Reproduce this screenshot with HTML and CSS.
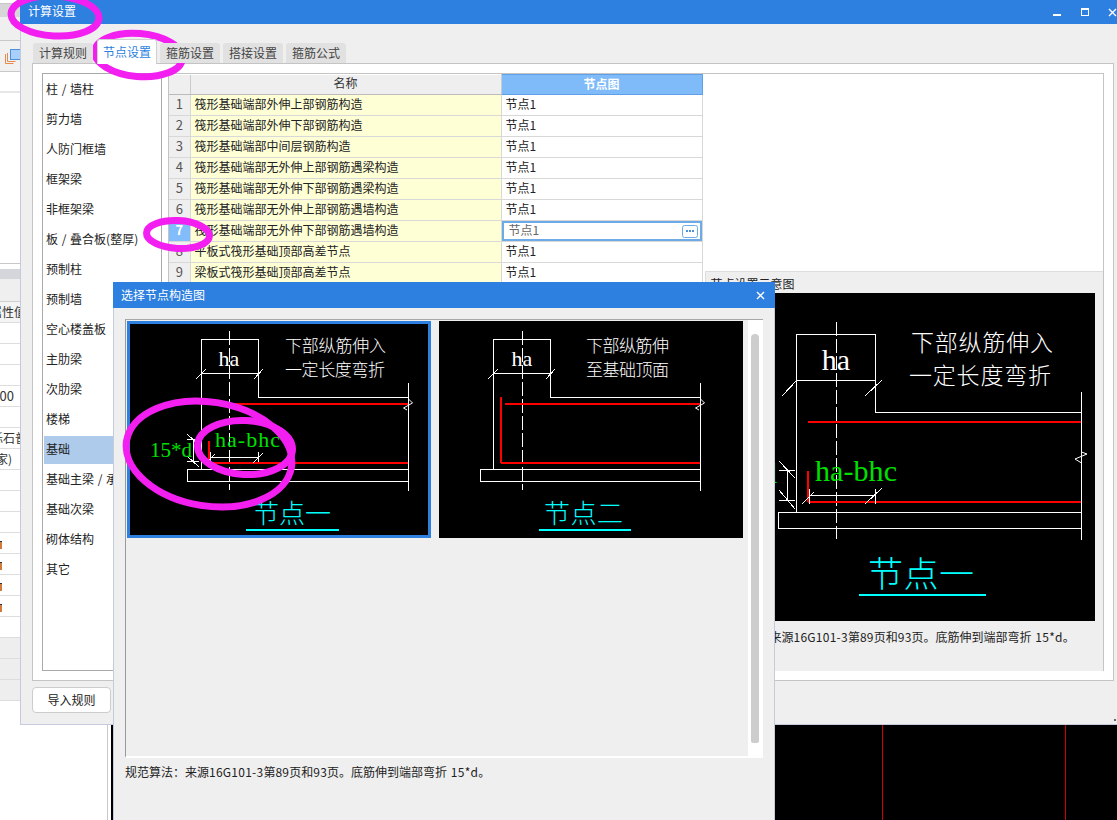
FILE: index.html
```html
<!DOCTYPE html>
<html lang="zh-CN">
<head>
<meta charset="utf-8">
<title>计算设置</title>
<link rel="stylesheet" href="styles.css">
</head>
<body>
<div class="desktop">

  <aside class="props">
    <div class="props-top"></div>
    <div class="props-gray"></div>
    <div class="props-band"></div>
    <div class="props-tools">
      <svg class="tool-icon" width="18" height="16" viewBox="0 0 18 16"><path class="tool-orange" d="M1.500 6v9.500h8M3.500 5v8.500h8"/><rect class="tool-blue" x="6.500" y="1.500" width="10" height="10"/></svg>
    </div>
    <div class="props-white"></div>
    <div class="props-rule"></div>
    <div class="props-empty"></div>
    <div class="props-section"></div>
    <div class="props-band props-band--low"></div>
    <div class="prow prow--head"><span class="ptext ptext--head">属性值</span></div>
    <div class="prow"></div>
    <div class="prow"></div>
    <div class="prow"></div>
    <div class="prow"><span class="ptext ptext--num">3000</span></div>
    <div class="prow"></div>
    <div class="prow"><span class="ptext ptext--mat">砾石普通</span></div>
    <div class="prow"><span class="ptext ptext--close">家)</span></div>
    <div class="prow"></div>
    <div class="prow"></div>
    <div class="prow"></div>
    <div class="prow"><i class="pmark"></i></div>
    <div class="prow"><i class="pmark"></i></div>
    <div class="prow"><i class="pmark"></i></div>
    <div class="prow"><i class="pmark"></i></div>
    <div class="prow"></div>
    <div class="prow prow--gray"></div>
    <div class="prow prow--gray"></div>
    <div class="prow prow--gray"></div>
  </aside>

  <div class="cad">
    <i class="cad-line cad-line--a"></i>
    <i class="cad-line cad-line--b"></i>
  </div>

  <section class="win">
    <header class="titlebar">
      <span class="title-text">计算设置</span>
      <div class="win-ctrls">
        <i class="ctrl-min"></i>
        <i class="ctrl-max"></i>
        <svg class="ctrl-close" width="9" height="9" viewBox="0 0 9 9"><path d="M1 1l7 7M8 1l-7 7"/></svg>
      </div>
    </header>
    <nav class="tabs">
      <span class="tab">计算规则</span>
      <span class="tab tab--active">节点设置</span>
      <span class="tab">箍筋设置</span>
      <span class="tab">搭接设置</span>
      <span class="tab">箍筋公式</span>
    </nav>
    <div class="panel">
      <ul class="cats">
        <li>柱 / 墙柱</li>
        <li>剪力墙</li>
        <li>人防门框墙</li>
        <li>框架梁</li>
        <li>非框架梁</li>
        <li>板 / 叠合板(整厚)</li>
        <li>预制柱</li>
        <li>预制墙</li>
        <li>空心楼盖板</li>
        <li>主肋梁</li>
        <li>次肋梁</li>
        <li>楼梯</li>
        <li class="cat--on">基础</li>
        <li>基础主梁 / 承台梁</li>
        <li>基础次梁</li>
        <li>砌体结构</li>
        <li>其它</li>
      </ul>
      <div class="sheet">
        <table class="grid">
          <colgroup><col class="col-n"><col class="col-name"><col class="col-node"></colgroup>
          <thead>
            <tr><th></th><th>名称</th><th class="th-on">节点图</th></tr>
          </thead>
          <tbody>
            <tr><td class="num">1</td><td class="name">筏形基础端部外伸上部钢筋构造</td><td class="node">节点1</td></tr>
            <tr><td class="num">2</td><td class="name">筏形基础端部外伸下部钢筋构造</td><td class="node">节点1</td></tr>
            <tr><td class="num">3</td><td class="name">筏形基础端部中间层钢筋构造</td><td class="node">节点1</td></tr>
            <tr><td class="num">4</td><td class="name">筏形基础端部无外伸上部钢筋遇梁构造</td><td class="node">节点1</td></tr>
            <tr><td class="num">5</td><td class="name">筏形基础端部无外伸下部钢筋遇梁构造</td><td class="node">节点1</td></tr>
            <tr><td class="num">6</td><td class="name">筏形基础端部无外伸上部钢筋遇墙构造</td><td class="node">节点1</td></tr>
            <tr><td class="num num--on">7</td><td class="name">筏形基础端部无外伸下部钢筋遇墙构造</td><td class="node node--edit"><div class="edit"><span>节点1</span><svg class="dots" width="16" height="13" viewBox="0 0 16 13"><rect class="dots-box" x="0.500" y="0.500" width="15" height="12" rx="2"/><path class="dots-pts" d="M4 5h2v2H4zM7 5h2v2H7zM10 5h2v2h-2z"/></svg></div></td></tr>
            <tr><td class="num">8</td><td class="name">平板式筏形基础顶部高差节点</td><td class="node">节点1</td></tr>
            <tr><td class="num">9</td><td class="name">梁板式筏形基础顶部高差节点</td><td class="node">节点1</td></tr>
          </tbody>
        </table>
        <div class="side">
          <div class="side-blank"></div>
          <div class="preview">
            <div class="preview-title">节点设置示意图</div>
            <svg class="dg preview-img" width="385" height="328" viewBox="0 0 385 328">
              <rect class="bg" width="385" height="328"/>
              <path class="w" d="M86.500 219.500V41.500H165.500V119.500H371.500M371.500 99V247M86.500 87.500H165.500M68.500 219.500H371.500V235.500H68.500ZM72 103L87 87M155 103L172 87"/>
              <path class="w dash" d="M126.500 29V246"/>
              <path class="brk" d="M371.500 159l5.500 2-12 5 6.500 4"/>
              <path class="r2" d="M98 128.500H370.500M98 208.500H370.500M98 178V208.500"/>
              <path class="w" d="M69 177.500H85M69 207.500H85M77.500 178V207M69 168L85 185M69 197L85 216M99 202.500H165.500M99 196V211M165.500 196V211M92 211L104 199M155 211L172 195"/>
              <text class="ha" x="126" y="77" font-size="30" text-anchor="middle">ha</text>
              <text class="cn" x="201" y="58" font-size="23" textLength="142">下部纵筋伸入</text>
              <text class="cn" x="199" y="91" font-size="23" textLength="142">一定长度弯折</text>
              <text class="gr" x="105" y="188" font-size="30" textLength="82">ha-bhc</text>
              <text class="gr" x="14" y="190" font-size="30" textLength="53">15*d</text>
              <text class="cy" x="158" y="294" font-size="35" textLength="106">节点一</text>
              <path class="c2" d="M149 302H276"/>
            </svg>
            <p class="preview-note">规范算法：来源<span class="lat">16G101-3</span>第<span class="lat">89</span>页和<span class="lat">93</span>页。底筋伸到端部弯折 <span class="lat">15*d</span>。</p>
          </div>
        </div>
      </div>
    </div>
    <div class="win-foot">
      <button class="btn" type="button">导入规则</button>
    </div>
    <i class="grip"></i>
  </section>

  <section class="dlg">
    <header class="dlg-title">
      <span>选择节点构造图</span>
      <svg class="dlg-x" width="9" height="9" viewBox="0 0 9 9"><path d="M1 1l7 7M8 1l-7 7"/></svg>
    </header>
    <div class="dlg-list">
      <div class="thumbs">
        <div class="thumb thumb--on">
          <svg class="dg" width="304" height="217" viewBox="0 0 304 217">
            <rect class="bg" width="304" height="217"/>
            <path class="w" d="M74.500 148.500V18.500H131.500V76.500H281.500M281.500 62V170M74.500 52.500H131.500M60.500 148.500H281.500V160.500H60.500ZM69 58L79 48M127 58L136 48"/>
            <path class="w dash" d="M102.500 10V169"/>
            <path class="brk" d="M281.500 78l4 4-9 5 3.500 2"/>
            <path class="r2" d="M82 82.500H281M82 141.500H281M82 120V141.500"/>
            <path class="w" d="M60 118.500H72M60 140.500H72M66.500 119V140M60 113L72 124M60 135L72 146M83 136.500H131M83 131V141M131.500 131V141M80 141L88 133M126 142L136 132"/>
            <text class="ha" x="102" y="45" font-size="22" text-anchor="middle">ha</text>
            <text class="cn" x="158" y="31" font-size="17" textLength="101">下部纵筋伸入</text>
            <text class="cn" x="158" y="55" font-size="17" textLength="100">一定长度弯折</text>
            <text class="gr" x="88" y="126" font-size="22" textLength="65">ha-bhc</text>
            <text class="gr" x="23" y="136" font-size="21" textLength="42">15*d</text>
            <text class="cy" x="126" y="202" font-size="26" textLength="78">节点一</text>
            <path class="c2" d="M119 209H212"/>
          </svg>
        </div>
        <div class="thumb">
          <svg class="dg" width="304" height="217" viewBox="0 0 304 217">
            <rect class="bg" width="304" height="217"/>
            <path class="w" d="M54.500 148.500V18.500H111.500V76.500H261.500M261.500 62V170M54.500 52.500H111.500M41.500 148.500H261.500V160.500H41.500ZM49 58L59 48M107 58L116 48"/>
            <path class="w dash" d="M83.500 10V169"/>
            <path class="brk" d="M261.500 78l4 4-9 5 3.500 2"/>
            <path class="r2" d="M66 82.500H261M62 141.500H261M62 76V142"/>
            <text class="ha" x="83" y="45" font-size="22" text-anchor="middle">ha</text>
            <text class="cn" x="147" y="31" font-size="17" textLength="83">下部纵筋伸</text>
            <text class="cn" x="147" y="55" font-size="17" textLength="83">至基础顶面</text>
            <text class="cy" x="105" y="202" font-size="26" textLength="79">节点二</text>
            <path class="c2" d="M100 209H192"/>
          </svg>
        </div>
      </div>
      <div class="vbar"><i class="vthumb"></i></div>
    </div>
    <p class="dlg-note">规范算法：来源<span class="lat">16G101-3</span>第<span class="lat">89</span>页和<span class="lat">93</span>页。底筋伸到端部弯折 <span class="lat">15*d</span>。</p>
  </section>

  <svg class="marks" width="1117" height="820" viewBox="0 0 1117 820">
    <ellipse cx="55" cy="16" rx="44" ry="20" transform="rotate(3 55 16)"/>
    <ellipse cx="138.500" cy="55" rx="44" ry="21.500" transform="rotate(5 138.500 55)"/>
    <ellipse cx="178" cy="234.500" rx="31.500" ry="14" transform="rotate(3 178 234.500)"/>
    <ellipse cx="209" cy="454" rx="83.500" ry="52" transform="rotate(9 209 454)"/>
    <ellipse cx="245" cy="447.500" rx="47.500" ry="27" transform="rotate(3 245 447.500)"/>
  </svg>
</div>
</body>
</html>
```
FILE: styles.css
```css
* { box-sizing: border-box; }
html, body { margin: 0; padding: 0; }
body { font-family: "Noto Sans CJK SC", "Microsoft YaHei", sans-serif; font-size: 12px; color: #222; }

.desktop { position: relative; width: 1117px; height: 820px; overflow: hidden; background: #fff; }

/* background property panel */
.props { position: absolute; left: 0; top: 0; width: 108px; height: 820px; border-right: 1px solid #c8c8c8; display: flex; flex-direction: column; background: #fff; }
.props-top { height: 4px; border-bottom: 1px solid #c8c8c8; }
.props-gray { height: 13px; background: #d6d6d8; flex: none; }
.props-band { height: 24px; background: #efefef; border-bottom: 1px solid #c8c8c8; flex: none; }
.props-tools { height: 31px; background: #f1f1f1; border-bottom: 1px solid #c8c8c8; flex: none; padding: 7px 0 0 4px; }
.tool-icon { display: block; }
.tool-orange { fill: none; stroke: #e88a4f; stroke-width: 1; }
.tool-blue { fill: #a9d0fb; stroke: #4f8fd8; stroke-width: 1; }
.props-white { height: 19px; flex: none; }
.props-rule { height: 2px; background: #e6e6e6; flex: none; }
.props-empty { height: 171px; border-bottom: 1px solid #c8c8c8; flex: none; }
.props-section { height: 10px; margin-top: 5px; background: #d4d6dc; flex: none; }
.props-band--low { height: 23px; border-bottom: 1px solid #d0d0d0; }
.prow { height: 21px; border-bottom: 1px solid #ddd; flex: none; overflow: hidden; white-space: nowrap; line-height: 20px; }
.prow--gray { background: #eee; }
.ptext { display: block; width: 20px; color: #333; }
.prow--head { background: #f4f4f4; }
.ptext--head { text-indent: -10px; }
.ptext--num { text-indent: -15px; font-size: 13px; }
.ptext--mat { text-indent: -9px; }
.ptext--close { text-indent: -4px; }
.pmark { display: block; width: 2px; height: 8px; margin-top: 8px; background: #d07a3c; border-top: 1px solid #234; }

/* cad canvas */
.cad { position: absolute; left: 111px; right: 0; top: 725px; bottom: 0; background: #000; }
.cad-line { position: absolute; top: 0; bottom: 0; width: 1px; background: #d40000; }
.cad-line--a { left: 771px; }
.cad-line--b { left: 954px; }

/* calculation settings window */
.win { position: absolute; left: 20px; top: 0; width: 1110px; height: 725px; background: #efefef; border-left: 1px solid #c3cbdc; border-bottom: 1px solid #c3cbdc; display: flex; flex-direction: column; }
.titlebar { height: 24px; flex: none; background: #2d7fe0; color: #fff; display: flex; align-items: center; padding: 0 0 0 7px; margin-left: -1px; }
.title-text { margin: 0 0 3px 1px; }
.win-ctrls { margin-left: auto; display: flex; align-items: center; margin-right: 13px; }
.ctrl-min { width: 8px; height: 2px; background: #fff; margin-top: 6px; margin-right: 20px; }
.ctrl-max { width: 8px; height: 8px; border: 1px solid #fff; border-top-width: 2px; margin-right: 19px; }
.ctrl-close { display: block; }
.ctrl-close path, .dlg-x path { stroke: #fff; stroke-width: 1.4; fill: none; }

.tabs { height: 39px; flex: none; display: flex; align-items: flex-end; gap: 3px; padding-left: 12px; position: relative; z-index: 1; }
.tab { width: 60px; height: 20px; background: #e1e1e1; color: #444; border-radius: 3px 3px 0 0; text-align: center; line-height: 20px; }
.tab:first-child { margin-right: 1px; }
.tab--active { height: 25px; margin-bottom: -1px; background: #fff; color: #2d7fe0; border: 1px solid #d0d0d0; border-bottom: 0; line-height: 23px; }

.panel { width: 1082px; height: 618px; margin-left: 11px; flex: none; background: #fff; border: 1px solid #c4c4c4; padding: 9px; display: flex; gap: 6px; }

.cats { width: 120px; flex: none; margin: 0; padding: 2px 0 0 1px; list-style: none; border: 1px solid #aaa; background: #fff; white-space: nowrap; overflow: hidden; word-spacing: 1px; }
.cats li { height: 28px; margin-bottom: 2px; line-height: 26px; padding-left: 2px; color: #222; }
.cats .cat--on { background: #aecbeb; }

.sheet { flex: 1; min-width: 0; border: 1px solid #c4c4c4; border-bottom: 0; display: flex; overflow: hidden; }
.grid { width: 533px; flex: none; table-layout: fixed; border-collapse: collapse; align-self: flex-start; line-height: 14px; }
.col-n { width: 21px; }
.col-name { width: 311px; }
.col-node { width: 201px; }
.grid th { height: 20px; background: #efefef; font-weight: 400; color: #333; padding: 0 0 2px; border-bottom: 1px solid #bbb; border-right: 1px solid #ccc; }
.grid .th-on { background: #7fbbf9; color: #fff; font-weight: 700; border: 1px solid #5fa0e8; }
.grid td { height: 21px; padding: 0 0 3px; border-bottom: 1px solid #d8d8d8; border-right: 1px solid #d8d8d8; white-space: nowrap; overflow: hidden; }
.grid .num { background: #efefef; text-align: center; color: #555; font-size: 13px; }
.grid .num--on { background: #82bcfa; color: #fff; font-weight: 700; }
.grid .name { background: #ffffd6; padding-left: 4px; }
.grid .node { background: #fff; padding-left: 4px; }
.grid .node--edit { padding: 0; }
.edit { height: 20px; border: 2px solid #6caae8; display: flex; align-items: center; padding: 0 2px 0 5px; color: #666; }
.edit span { margin-bottom: 3px; }
.dots { margin-left: auto; display: block; }
.dots-box { fill: #fff; stroke: #6caae8; }
.dots-pts { fill: #4f8fd8; }

.side { flex: 1; min-width: 0; display: flex; flex-direction: column; margin-left: 1px; }
.side-blank { height: 197px; flex: none; }
.preview { flex: 1; min-height: 0; margin-left: 1px; background: #efefef; border: 1px solid #ddd; border-right: 0; border-bottom: 0; padding-left: 4px; }
.preview-title { height: 21px; line-height: 23px; padding-left: 1px; }
.preview-img { margin-left: 0; }
.preview-note { margin: 8px 0 0; line-height: 16px; white-space: nowrap; word-spacing: 1px; }
.lat { letter-spacing: 0.25px; }

.win-foot { flex: 1; padding: 6px 0 0 11px; }
.btn { width: 79px; height: 26px; background: #fff; border: 1px solid #ccc; border-radius: 4px; font: inherit; color: #222; padding: 0 0 2px; }
.grip { position: absolute; left: 1093px; top: 719px; width: 2px; height: 2px; background: #666; }

/* node picker dialog */
.dlg { position: absolute; left: 113px; top: 282px; width: 662px; height: 538px; background: #efefef; border-left: 1px solid #c3cbdc; border-right: 1px solid #c3cbdc; padding: 0 0 0 11px; }
.dlg-title { height: 26px; margin: 0 -1px 0 -12px; background: #2d7fe0; color: #fff; display: flex; align-items: center; justify-content: space-between; padding: 0 10px 2px 8px; }
.dlg-x { display: block; margin-top: 2px; }
.dlg-list { width: 638px; height: 439px; margin-top: 11px; background: #fff; border-top: 1px solid #a8a8a8; border-left: 1px solid #999; border-bottom: 2px solid #fff; display: flex; }
.thumbs { width: 622px; background: #efefef; display: flex; align-items: flex-start; gap: 8px; padding: 1px 0 0 1px; }
.thumb { position: relative; width: 304px; height: 217px; flex: none; }
.thumb svg { display: block; }
.thumb--on { outline: 3px solid #2d7fe0; outline-offset: -3px; }
.vbar { flex: 1; padding: 14px 0 0 3px; }
.vthumb { display: block; width: 8px; height: 409px; background: #cdcdcd; border-radius: 4px 4px 2px 2px; }
.dlg-note { margin: 6px 0 0; line-height: 16px; color: #222; word-spacing: 1px; }

/* CAD drawing strokes */
.dg { display: block; font-family: "Noto Sans CJK SC", sans-serif; }
.dg .bg { fill: #000; }
.dg .w { fill: none; stroke: #fff; stroke-width: 1; shape-rendering: crispEdges; }
.dg .dash { stroke-dasharray: 14 3; }
.dg .brk { fill: none; stroke: #fff; stroke-width: 1; }
.dg .r2 { fill: none; stroke: #f00; stroke-width: 2; shape-rendering: crispEdges; }
.dg .c2 { fill: none; stroke: #0ff; stroke-width: 2; shape-rendering: crispEdges; }
.dg .ha { fill: #fff; font-family: "Liberation Serif", serif; }
.dg .cn { fill: #fff; font-weight: 300; }
.dg .gr { fill: #00e000; font-family: "Liberation Serif", serif; }
.dg .cy { fill: #0ff; font-weight: 300; }

/* hand-drawn annotations lying over the screenshot */
.marks { position: absolute; left: 0; top: 0; pointer-events: none; }
.marks ellipse { fill: none; stroke: #f31ff0; stroke-width: 7; }
```
